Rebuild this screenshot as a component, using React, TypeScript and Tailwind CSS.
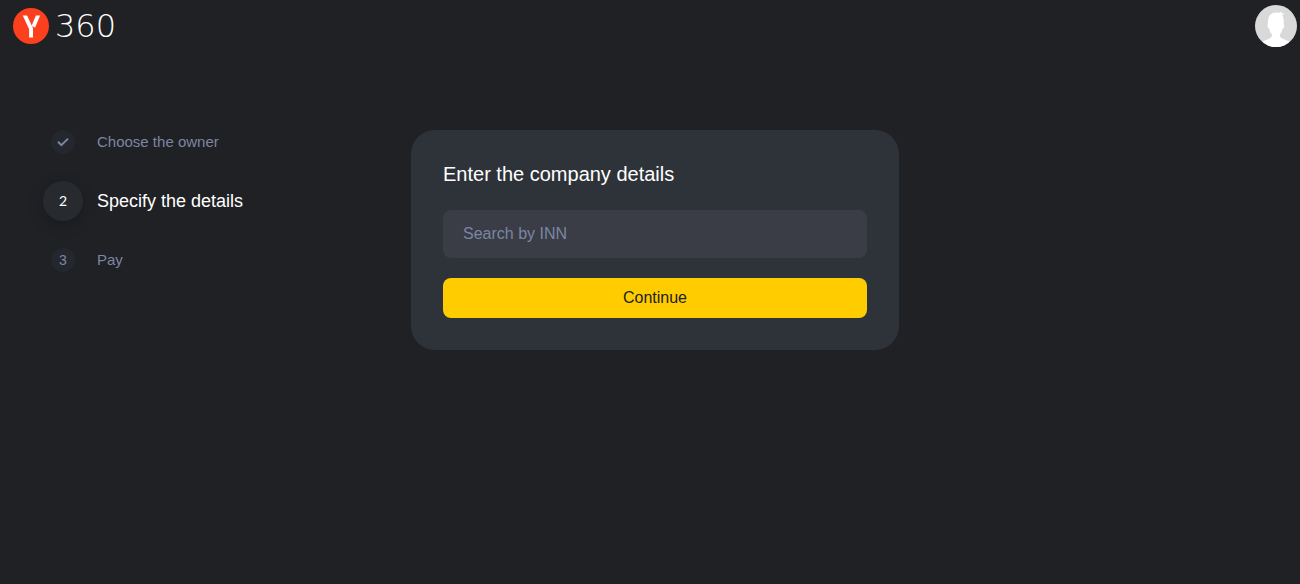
import { useState } from "react"
import clsx from "clsx"

const steps = [
  { id: 1, label: "Choose the owner" },
  { id: 2, label: "Specify the details" },
  { id: 3, label: "Pay" },
]

function Logo() {
  return (
    <a href="#" aria-label="Yandex 360" className="flex items-center gap-1.5">
      <svg viewBox="0 0 36 36" className="size-9" aria-hidden="true">
        <circle cx="18" cy="18" r="18" fill="#fc3f1d" />
        <svg y="7.500" width="36" height="22" viewBox="0 7.500 36 22" fill="none" stroke="#fff" strokeWidth="3.900">
          <path d="M10.500 4.500 18.050 20.600V30" />
          <path d="M26.300 4.500 20.300 18.800" />
        </svg>
      </svg>
      <span className="font-['DejaVu_Sans'] text-[32px] leading-9 font-extralight text-white">360</span>
    </a>
  )
}

function Avatar() {
  return (
    <button type="button" aria-label="Account" className="size-[42px] overflow-hidden rounded-full bg-[#d9d9d9]">
      <svg viewBox="0 0 42 42" className="size-full" aria-hidden="true">
        <path
          fill="#fff"
          d="M3 42C5 37.500 9 35.500 13 34.200c2.600-.9 4-2.200 4-4.700-1.500-1.700-2.400-3.600-2.800-5.800-1.500-.4-2.200-3.500-1.200-4.700-.3-3.500.1-6.600 2-8.900C17.200 7.700 20 7.200 22.500 7.600c1.700.3 3.300-.2 4.300-1.100 0 .8-.2 1.300-.6 1.800 1 .1 2-.1 2.800-.6-.3 1.300-.9 2-1.700 2.500 1.500 2.600 1.600 5.700 1.300 8.700 1.100 1.100.5 4.400-1 4.800-.4 2.200-1.300 4.100-2.800 5.800 0 2.500 1.400 3.800 4 4.700C33 35.500 37 37.500 39 42Z"
        />
      </svg>
    </button>
  )
}

function Steps({ current }: { current: number }) {
  return (
    <ol className="flex flex-col gap-[27px]">
      {steps.map(({ id, label }) => {
        const active = id === current
        return (
          <li
            key={id}
            aria-current={active ? "step" : undefined}
            className={clsx("flex items-center gap-3.5", active ? "text-lg text-white" : "text-[15px] text-[#7b86a3]")}
          >
            <span className="flex w-10 justify-center">
              <span
                className={clsx(
                  "flex items-center justify-center rounded-full text-sm",
                  active
                    ? "size-10 bg-[#272a2f] font-[Lato] shadow-[0_4px_16px_rgba(0,0,0,0.2)]"
                    : "size-6 bg-[#25272f]"
                )}
              >
                {id < current ? (
                  <svg viewBox="0 0 12 12" className="size-3" fill="none" stroke="currentColor" strokeWidth="2" aria-label="Done">
                    <path d="M1 5.800 4.400 9.200 11 2.600" />
                  </svg>
                ) : (
                  id
                )}
              </span>
            </span>
            <span className={active ? "leading-10" : "leading-6"}>{label}</span>
          </li>
        )
      })}
    </ol>
  )
}

export default function App() {
  const [inn, setInn] = useState("")

  return (
    <div className="min-h-screen bg-[#202124] font-['Liberation_Sans',Arial,sans-serif]">
      {/* Header */}
      <header className="flex h-[52px] items-center justify-between pr-[3px] pl-[13px]">
        <Logo />
        <Avatar />
      </header>

      {/* Main Content */}
      <main className="flex items-start pt-[78px]">
        <aside className="w-[411px] shrink-0 pl-[43px]">
          <Steps current={2} />
        </aside>

        <form
          className="w-full max-w-[488px] rounded-3xl bg-[#2e3339] px-8 pt-[30px] pb-8"
          onSubmit={(e) => e.preventDefault()}
        >
          <h1 className="mb-[22px] text-xl leading-7 text-white">Enter the company details</h1>
          <input
            type="text"
            aria-label="Search by INN"
            placeholder="Search by INN"
            value={inn}
            onChange={(e) => setInn(e.target.value)}
            className="mb-5 block h-12 w-full rounded-lg bg-[#3a3d45] px-5 text-base text-white outline-none placeholder:text-[#7b86a3]"
          />
          <button type="submit" className="block h-10 w-full rounded-lg bg-[#ffcc00] text-base text-[#202124]">
            Continue
          </button>
        </form>
      </main>
    </div>
  )
}
